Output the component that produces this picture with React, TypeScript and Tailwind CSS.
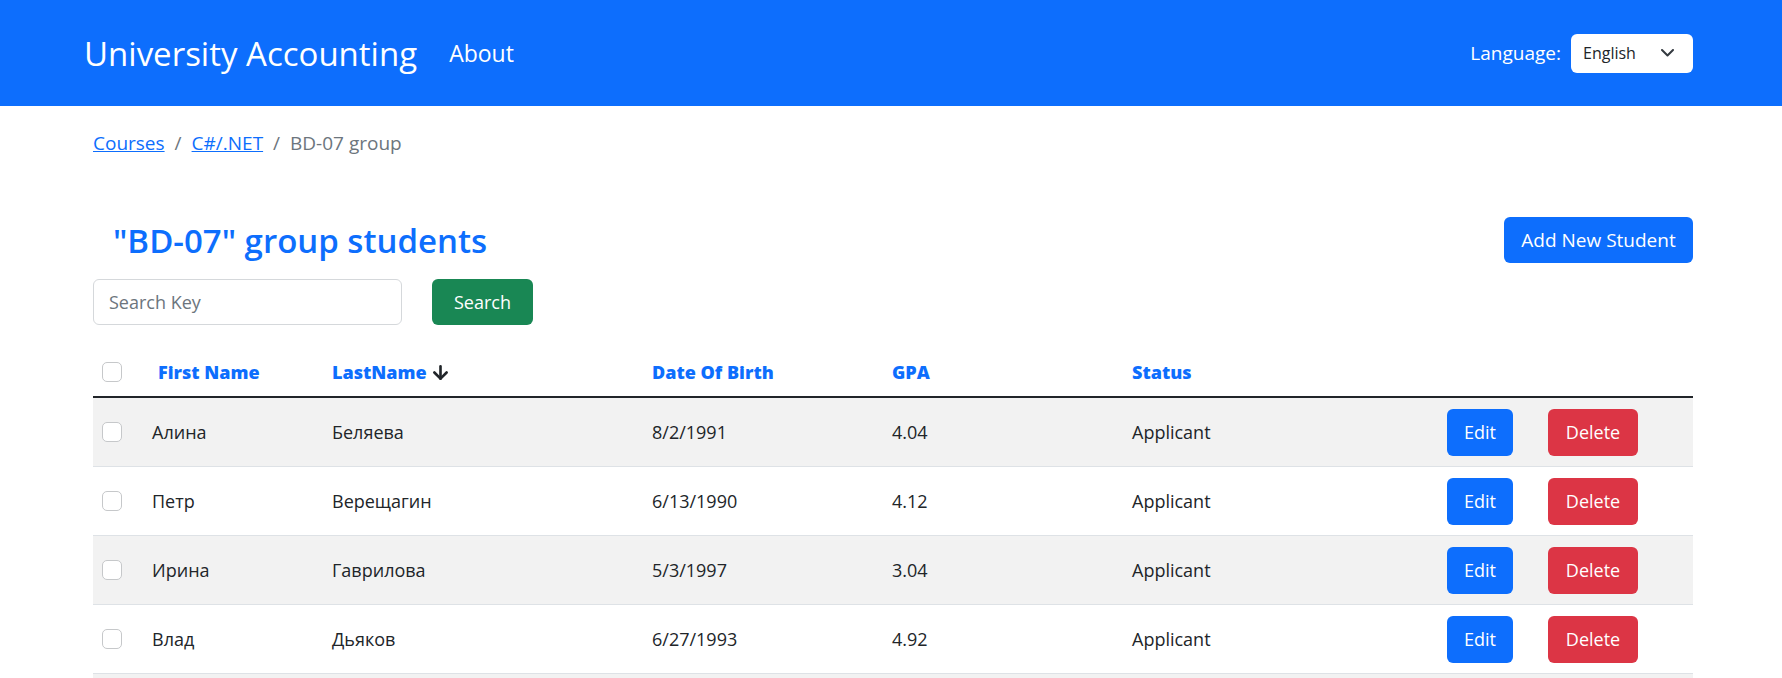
import { ArrowDown } from "lucide-react";

type Student = {
    firstName: string;
    lastName: string;
    birth: string;
    gpa: string;
    status: string;
};

const students: Student[] = [
    { firstName: "Алина", lastName: "Беляева", birth: "8/2/1991", gpa: "4.04", status: "Applicant" },
    { firstName: "Петр", lastName: "Верещагин", birth: "6/13/1990", gpa: "4.12", status: "Applicant" },
    { firstName: "Ирина", lastName: "Гаврилова", birth: "5/3/1997", gpa: "3.04", status: "Applicant" },
    { firstName: "Влад", lastName: "Дьяков", birth: "6/27/1993", gpa: "4.92", status: "Applicant" },
    { firstName: "Олег", lastName: "Егоров", birth: "3/14/1995", gpa: "3.87", status: "Applicant" },
];

const cols = "grid grid-cols-[59px_180px_320px_240px_240px_315px_101px_145px] items-center";

const Checkbox = () => (
    <div className="pl-[9px]">
        <input
            type="checkbox"
            className="block appearance-none w-[20px] h-[20px] rounded-[5px] border border-[#c6c8ca] bg-white"
        />
    </div>
);

const App = () => {
    return (
        <div className="min-h-screen bg-white font-['Open_Sans',sans-serif] text-[#212529]">
            <nav className="flex items-center h-[106px] bg-[#0d6efd] pl-[84px] pr-[89px] text-white">
                <span className="text-[33px] leading-none">University Accounting</span>
                <span className="ml-[32px] text-[23px] leading-none">About</span>
                <div className="ml-auto flex items-center gap-[10px]">
                    <span className="text-[19px]">Language:</span>
                    <div className="flex items-center justify-between w-[122px] h-[39px] rounded-[6px] bg-white pl-[12px] pr-[19px] text-[16px] text-[#212529]">
                        <span>English</span>
                        <svg width="13" height="8" viewBox="0 0 13 8" fill="none">
                            <path d="M1 1l5.5 5.5L12 1" stroke="#343a40" strokeWidth="2" strokeLinecap="round" strokeLinejoin="round" />
                        </svg>
                    </div>
                </div>
            </nav>

            <main className="ml-[93px] w-[1600px]">
                <div className="pt-[22px] flex items-center h-[52px] text-[19px] leading-[30px]">
                    <a href="#" className="text-[#0d6efd] underline">Courses</a>
                    <span className="px-[10px] text-[#6c757d]">/</span>
                    <a href="#" className="text-[#0d6efd] underline">C#/.NET</a>
                    <span className="px-[10px] text-[#6c757d]">/</span>
                    <span className="text-[#6c757d]">BD-07 group</span>
                </div>

                <div className="mt-[59px] flex items-center justify-between h-[46px]">
                    <h1 className="pl-[20px] text-[33px] font-semibold text-[#0d6efd] leading-none">"BD-07" group students</h1>
                    <button className="w-[189px] h-[46px] rounded-[6px] bg-[#0d6efd] text-white text-[19px]">Add New Student</button>
                </div>

                <div className="mt-[16px] flex items-center">
                    <input
                        placeholder="Search Key"
                        className="w-[309px] h-[46px] rounded-[6px] border border-[#d5d8db] px-[15px] text-[18px] placeholder:text-[#6c757d]"
                    />
                    <button className="ml-[30px] w-[101px] h-[46px] rounded-[6px] bg-[#198754] text-white text-[18px]">Search</button>
                </div>

                <div className="mt-[23px]">
                    <div className={`${cols} h-[50px] border-b-2 border-[#212529] text-[18px] font-extrabold text-[#0d6efd]`}>
                        <Checkbox />
                        <span className="pl-[6px]">First Name</span>
                        <span className="flex items-center gap-[3px]">
                            LastName
                            <ArrowDown size={21} strokeWidth={3} className="text-[#212529]" />
                        </span>
                        <span>Date Of Birth</span>
                        <span>GPA</span>
                        <span>Status</span>
                        <span />
                        <span />
                    </div>
                    {students.map((s, i) => (
                        <div
                            key={i}
                            className={`${cols} h-[69px] border-b border-[#dee2e6] text-[18px] ${i % 2 === 0 ? "bg-[#f2f2f2]" : "bg-white"}`}
                        >
                            <Checkbox />
                            <span>{s.firstName}</span>
                            <span>{s.lastName}</span>
                            <span>{s.birth}</span>
                            <span>{s.gpa}</span>
                            <span>{s.status}</span>
                            <div>
                                <button className="w-[66px] h-[47px] rounded-[6px] bg-[#0d6efd] text-white text-[18px]">Edit</button>
                            </div>
                            <div>
                                <button className="w-[90px] h-[47px] rounded-[6px] bg-[#dc3545] text-white text-[18px]">Delete</button>
                            </div>
                        </div>
                    ))}
                </div>
            </main>
        </div>
    );
};

export default App;
